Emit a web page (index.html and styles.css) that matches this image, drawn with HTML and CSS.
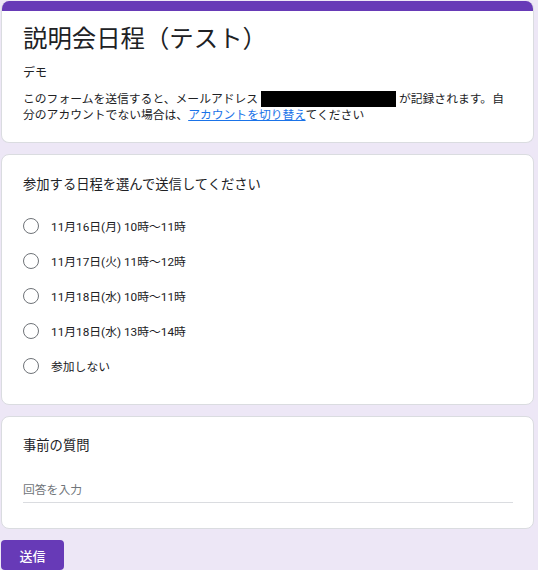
FILE: index.html
```html
<!DOCTYPE html>
<html lang="ja">
<head>
<meta charset="utf-8">
<title>説明会日程（テスト）</title>
<link rel="stylesheet" href="styles.css">
</head>
<body>
<div class="page">
  <div class="card header-card">
    <div class="band"></div>
    <div class="card-body header-body">
      <h1 class="title">説明会日程（テスト）</h1>
      <p class="desc">デモ</p>
      <p class="notice">このフォームを送信すると、メールアドレス <span class="redact"></span> が記録されます。自分のアカウントでない場合は、<a class="link" href="#">アカウントを切り替え</a>てください</p>
    </div>
  </div>

  <div class="card">
    <div class="card-body choice-body">
      <div class="question">参加する日程を選んで送信してください</div>
      <div class="options">
        <label class="option"><span class="radio"></span><span class="opt-label">11月16日(月) 10時〜11時</span></label>
        <label class="option"><span class="radio"></span><span class="opt-label">11月17日(火) 11時〜12時</span></label>
        <label class="option"><span class="radio"></span><span class="opt-label">11月18日(水) 10時〜11時</span></label>
        <label class="option"><span class="radio"></span><span class="opt-label">11月18日(水) 13時〜14時</span></label>
        <label class="option"><span class="radio"></span><span class="opt-label">参加しない</span></label>
      </div>
    </div>
  </div>

  <div class="card">
    <div class="card-body text-body">
      <div class="question">事前の質問</div>
      <div class="answer">回答を入力</div>
    </div>
  </div>

  <div class="actions">
    <button class="submit" type="button">送信</button>
  </div>
</div>
</body>
</html>
```

FILE: styles.css
```css
html, body {
  margin: 0;
  padding: 0;
  background: #ede7f6;
}
body {
  font-family: Roboto, "Noto Sans CJK JP", sans-serif;
  color: #202124;
  width: 538px;
  height: 570px;
  overflow: hidden;
}
.page {
  padding: 1px 4px 0 1px;
  display: flex;
  flex-direction: column;
  gap: 11px;
}
.card {
  background: #fff;
  border: 1px solid #dadce0;
  border-radius: 8px;
  overflow: hidden;
}
.header-card {
  border-top: none;
}
.band {
  height: 10px;
  background: #673ab7;
}
.card-body {
  padding: 19px 20px 21px 21px;
}
.header-body {
  padding-top: 9px;
  padding-bottom: 19px;
}
.title {
  margin: 0;
  font-family: "Noto Sans CJK JP", sans-serif;
  font-weight: 400;
  font-size: 24.4px;
  line-height: 33px;
  color: #202124;
}
.desc {
  margin: 12px 0 0;
  font-size: 12px;
  line-height: 17px;
}
.notice {
  margin: 9px 0 0;
  font-size: 11.8px;
  line-height: 16px;
}
.redact {
  display: inline-block;
  width: 135px;
  height: 16px;
  background: #000;
  vertical-align: -4px;
}
.link {
  color: #1a73e8;
  text-decoration: underline;
}
.choice-body {
  padding-top: 20px;
}
.question {
  font-size: 13.3px;
  line-height: 20px;
  color: #202124;
}
.options {
  margin-top: 13px;
  display: flex;
  flex-direction: column;
}
.option {
  display: flex;
  align-items: center;
  height: 35px;
}
.radio {
  box-sizing: border-box;
  width: 16px;
  height: 16px;
  border: 1.6px solid #6f7378;
  border-radius: 50%;
  flex: none;
}
.opt-label {
  margin-left: 12px;
  font-size: 11.8px;
  color: #202124;
}
.text-body {
  padding-bottom: 25px;
}
.answer {
  margin-top: 22px;
  height: 24px;
  line-height: 24px;
  font-size: 11.8px;
  color: #70757a;
  border-bottom: 1px solid #dadce0;
}
.actions {
  display: flex;
}
.submit {
  width: 63px;
  height: 30px;
  background: #673ab7;
  color: #fff;
  border: none;
  border-radius: 4px;
  font-family: Roboto, "Noto Sans CJK JP", sans-serif;
  font-size: 13px;
  font-weight: 500;
  padding: 0;
}
```
